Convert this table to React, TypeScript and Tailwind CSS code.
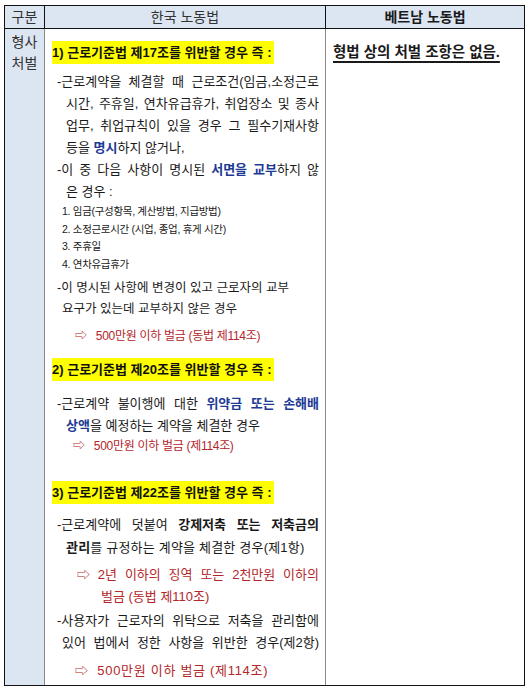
import React from "react";

const J = "whitespace-nowrap text-justify [text-align-last:justify]";

function Hl({ children }: { children: React.ReactNode }) {
  return (
    <div className="h-[24px] leading-[24px] whitespace-nowrap">
      <span className="bg-[#ffff00] font-bold text-[13px] text-[#111] pr-[3px] py-[4px]">{children}</span>
    </div>
  );
}

const Blue = ({ children }: { children: React.ReactNode }) => (
  <span className="font-bold text-[#1d3a94]">{children}</span>
);

export default function App() {
  return (
    <div
      className="w-[528px] h-[690px] bg-white pl-[4px] pt-[5px] text-[#1a1a1a]"
      style={{ fontFamily: '"Liberation Sans", "Noto Sans CJK KR", sans-serif' }}
    >
      <div className="w-[521px] border border-[#111]">
        {/* header */}
        <div className="grid grid-cols-[40px_281px_198px] h-[23px] bg-[#dce6f2] border-b border-[#111] text-[14px]">
          <div className="border-r border-[#111] flex items-center justify-center text-[#333]">구분</div>
          <div className="border-r border-[#111] flex items-center justify-center text-[#333]">한국 노동법</div>
          <div className="flex items-center justify-center font-bold">베트남 노동법</div>
        </div>

        {/* body */}
        <div className="grid grid-cols-[40px_281px_198px] h-[656px] overflow-hidden">
          <div className="bg-[#dce6f2] border-r border-[#8a8a8a] pt-[3px] text-[14px] leading-[21px] text-center text-[#333]">
            <div>형사</div>
            <div>처벌</div>
          </div>

          <div className="border-r border-[#8a8a8a] pl-[7px] pr-[6px] pt-[11px] whitespace-nowrap">
            <Hl>1) 근로기준법 제17조를 위반할 경우 즉 :</Hl>
            <div className="mt-[7px] text-[13px] leading-[22px] pl-[5px]">
              <div className={J}>-근로계약을 체결할 때 근로조건(임금,소정근로</div>
              <div className={`${J} pl-[9px]`}>시간, 주휴일, 연차유급휴가, 취업장소 및 종사</div>
              <div className={`${J} pl-[9px]`}>업무, 취업규칙이 있을 경우 그 필수기재사항</div>
              <div className="pl-[9px]">등을 <Blue>명시</Blue>하지 않거나,</div>
              <div className={J}>-이 중 다음 사항이 명시된 <Blue>서면을 교부</Blue>하지 않</div>
              <div className="pl-[9px]">은 경우 :</div>
            </div>
            <div className="text-[10.5px] leading-[17.5px] pl-[10px] tracking-[-0.3px]">
              <div>1. 임금(구성항목, 계산방법, 지급방법)</div>
              <div>2. 소정근로시간 (시업, 종업, 휴게 시간)</div>
              <div>3. 주휴일</div>
              <div>4. 연차유급휴가</div>
            </div>
            <div className="mt-[5px] text-[12.5px] leading-[21px] pl-[5px]">
              <div>-이 명시된 사항에 변경이 있고 근로자의 교부</div>
              <div className="pl-[5px]">요구가 있는데 교부하지 않은 경우</div>
            </div>
            <div className="mt-[5px] text-[12px] leading-[22px] pl-[23px] text-[#b3262a] tracking-[-0.3px]">
              ⇨&nbsp;&nbsp; 500만원 이하 벌금 (동법 제114조)
            </div>

            <div className="mt-[10px]">
              <Hl>2) 근로기준법 제20조를 위반할 경우 즉 :</Hl>
            </div>
            <div className="mt-[12px] text-[13px] leading-[22px] pl-[5px]">
              <div className={J}>-근로계약 불이행에 대한 <Blue>위약금 또는 손해배</Blue></div>
              <div className="pl-[9px]"><Blue>상액</Blue>을 예정하는 계약을 체결한 경우</div>
            </div>
            <div className="text-[12px] leading-[18px] pl-[21px] text-[#b3262a] tracking-[-0.3px]">
              ⇨&nbsp;&nbsp; 500만원 이하 벌금 (제114조)
            </div>

            <div className="mt-[25px]">
              <Hl>3) 근로기준법 제22조를 위반할 경우 즉 :</Hl>
            </div>
            <div className="mt-[9px] text-[13px] leading-[23px] pl-[5px]">
              <div className={J}>-근로계약에 덧붙여 <b>강제저축 또는 저축금의</b></div>
              <div className="pl-[9px] tracking-[0.2px]"><b>관리</b>를 규정하는 계약을 체결한 경우(제1항)</div>
            </div>
            <div className="mt-[5px] text-[13px] leading-[22px] pl-[25px] text-[#b3262a]">
              <div className={J}>⇨ 2년 이하의 징역 또는 2천만원 이하의</div>
              <div className="pl-[24px]">벌금 (동법 제110조)</div>
            </div>
            <div className="mt-[2px] text-[13px] leading-[22px] pl-[5px]">
              <div className={J}>-사용자가 근로자의 위탁으로 저축을 관리함에</div>
              <div className={`${J} pl-[5px]`}>있어 법에서 정한 사항을 위반한 경우(제2항)</div>
            </div>
            <div className="mt-[6px] text-[13px] leading-[22px] pl-[23px] text-[#b3262a] tracking-[0.7px]">
              ⇨&nbsp; 500만원 이하 벌금 (제114조)
            </div>
          </div>

          <div className="pl-[7px] pt-[11px]">
            <div className="h-[24px] leading-[24px] text-[14.5px] font-bold whitespace-nowrap">
              <span className="underline decoration-[1.5px] underline-offset-[4px]">형법 상의 처벌 조항은 없음.</span>
            </div>
          </div>
        </div>
      </div>
    </div>
  );
}
